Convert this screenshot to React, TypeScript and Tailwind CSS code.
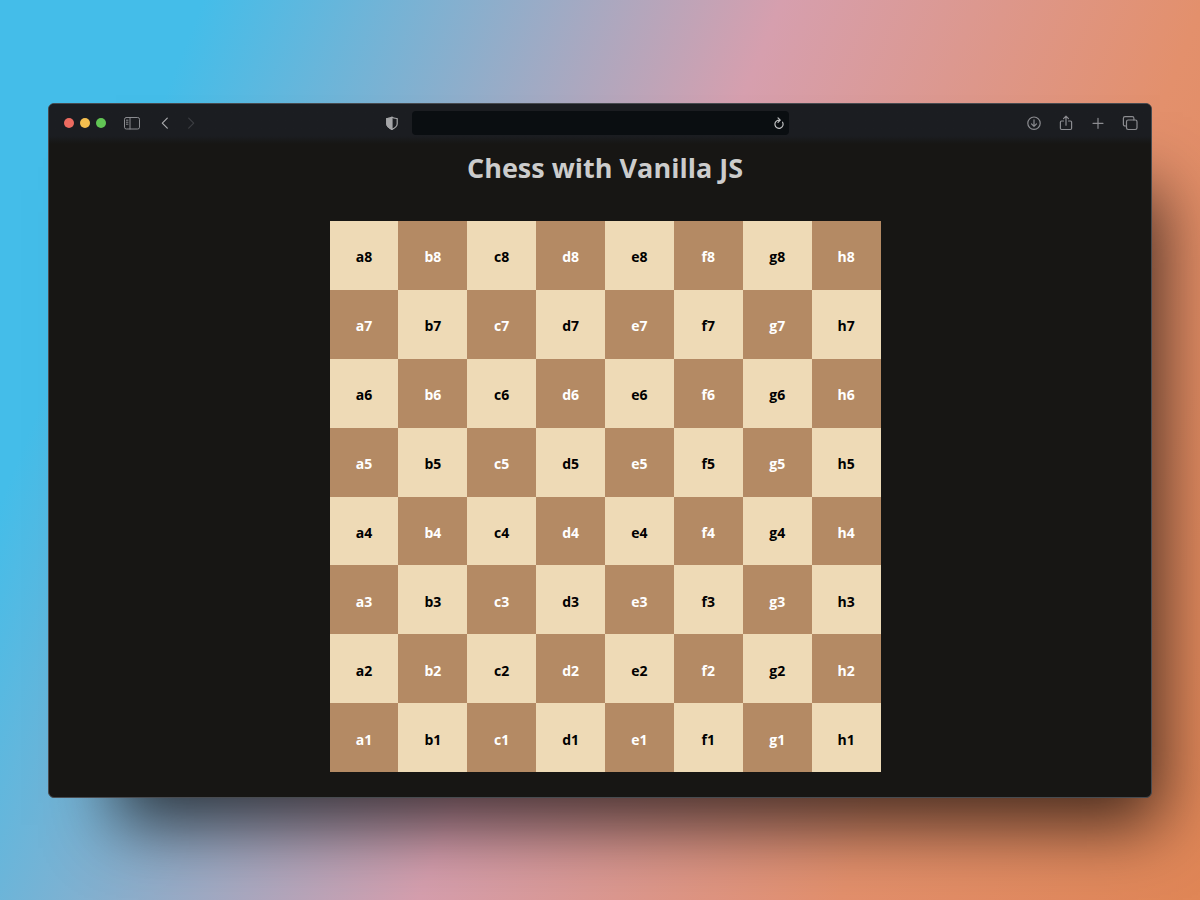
import React from "react";

const files = ["a", "b", "c", "d", "e", "f", "g", "h"];
const ranks = [8, 7, 6, 5, 4, 3, 2, 1];

type IconProps = { children: React.ReactNode; className?: string };

function Icon({ children, className = "h-4 w-4" }: IconProps) {
  return (
    <svg
      viewBox="0 0 16 16"
      className={className}
      fill="none"
      stroke="currentColor"
      strokeWidth="1.2"
      strokeLinecap="round"
      strokeLinejoin="round"
      aria-hidden="true"
    >
      {children}
    </svg>
  );
}

function ToolButton({ label, className = "", children }: { label: string; className?: string; children: React.ReactNode }) {
  return (
    <button type="button" aria-label={label} className={`flex h-4 w-4 shrink-0 items-center justify-center ${className}`}>
      {children}
    </button>
  );
}

function Toolbar() {
  return (
    <header className="grid h-10 grid-cols-[1fr_auto_1fr] items-center bg-linear-to-b from-[#1b1d21] from-80% to-[#171614] pr-[13px] pb-0.5 pl-[15px] text-[#8b8c90]">
      <div className="flex items-center">
        <div className="flex gap-1.5">
          <button type="button" aria-label="Close" className="h-2.5 w-2.5 rounded-full bg-[#ec6b60]" />
          <button type="button" aria-label="Minimize" className="h-2.5 w-2.5 rounded-full bg-[#f5bf4f]" />
          <button type="button" aria-label="Maximize" className="h-2.5 w-2.5 rounded-full bg-[#61c554]" />
        </div>
        <ToolButton label="Sidebar" className="ml-[18px]">
          <svg viewBox="0 0 18 16" className="h-4 w-[18px] shrink-0" fill="none" stroke="currentColor" strokeLinecap="round" aria-hidden="true">
            <rect x="1.5" y="2.5" width="15" height="11.5" rx="1.8" />
            <path d="M7 2.5v11.5M3.4 5.2h1.6M3.4 7.2h1.6M3.4 9.2h1.6" />
          </svg>
        </ToolButton>
        <ToolButton label="Back" className="ml-[17px] text-[#aaabad]">
          <Icon><path d="M10.3 3.2 5.3 8.2l5 5" /></Icon>
        </ToolButton>
        <ToolButton label="Forward" className="ml-2.5 text-[#3c3e42]">
          <Icon><path d="m5.7 3.2 5 5-5 5" /></Icon>
        </ToolButton>
      </div>

      <div className="mr-[30px] flex items-center gap-3">
        <ToolButton label="Privacy report" className="text-[#a5a6a8]">
          <Icon>
            <path d="M8 2.2c1.4.9 3.2 1.1 5.2 1.4v5.2c0 2.5-2.3 4.3-5.2 5.6-2.9-1.3-5.2-3.1-5.2-5.6V3.6C4.8 3.3 6.6 3.1 8 2.2z" />
            <path d="M8 2.2v12.2c-2.9-1.3-5.2-3.1-5.2-5.6V3.6C4.8 3.3 6.6 3.1 8 2.2z" fill="currentColor" />
          </Icon>
        </ToolButton>
        <div className="flex h-6 w-[377px] items-center rounded-sm bg-[#0a0e11] pr-0.5">
          <input type="text" aria-label="Address" className="h-full min-w-0 flex-1 bg-transparent px-2 text-xs text-[#cccccc] outline-none" />
          <ToolButton label="Reload" className="text-[#c0c1c2]">
            <Icon>
              <path d="M11.6 7.2A4.1 4.1 0 1 1 8 5.100h1M7 2.800 9.300 5.100 7 7.400" />
            </Icon>
          </ToolButton>
        </div>
      </div>

      <div className="flex items-center justify-end gap-4">
        <ToolButton label="Downloads">
          <Icon>
            <circle cx="8" cy="8.2" r="6.2" />
            <path d="M8 4.900v6.400M5.500 8.900 8 11.400l2.500-2.500" />
          </Icon>
        </ToolButton>
        <ToolButton label="Share">
          <Icon>
            <path d="M5.500 6H3.600c-.7 0-1.200.5-1.200 1.200v6.100c0 .7.5 1.200 1.200 1.200h8.800c.7 0 1.200-.5 1.200-1.200V7.200c0-.7-.5-1.200-1.200-1.200h-1.900M8 10.200V1.300M5.500 3.700 8 1.200l2.500 2.500" />
          </Icon>
        </ToolButton>
        <ToolButton label="New tab">
          <Icon><path d="M8 3.300v10M3 8.300h10" /></Icon>
        </ToolButton>
        <ToolButton label="Tab overview">
          <Icon>
            <rect x="4.5" y="5" width="10.5" height="9.5" rx="1.7" />
            <path d="M4.500 11H3c-.9 0-1.600-.7-1.600-1.600V3.300c0-.9.7-1.600 1.600-1.600h7.300c.9 0 1.600.7 1.600 1.600V5" />
          </Icon>
        </ToolButton>
      </div>
    </header>
  );
}

function Board() {
  return (
    <div className="grid w-[551px] max-w-full grid-cols-8">
      {ranks.map((rank, row) =>
        files.map((file, column) => (
          <div
            key={`${file}${rank}`}
            className={`flex aspect-square items-center justify-center pt-1 text-sm font-bold ${
              (row + column) % 2 === 0 ? "bg-[#eedab6] text-black" : "bg-[#b48a64] text-white"
            }`}
          >
            {file}
            {rank}
          </div>
        )),
      )}
    </div>
  );
}

export default function App() {
  return (
    <div className="min-h-screen bg-[linear-gradient(112deg,#44bde9_13%,#d69fae_50%,#e3906c_77%,#e08656_100%)] px-12 pt-[103px] pb-[102px] font-['Open_Sans','Noto_Sans',sans-serif]">
      <div className="overflow-hidden rounded-md border border-[#484b50] bg-[#171614] shadow-[38px_57px_64px_-30px_rgba(0,0,0,0.7)]">
        <Toolbar />
        <main className="flex flex-col items-center pb-[25px] pl-2.5">
          <h1 className="mt-1 mb-[33px] text-[27px] leading-10 font-bold text-[#cccccc]">Chess with Vanilla JS</h1>
          <Board />
        </main>
      </div>
    </div>
  );
}
